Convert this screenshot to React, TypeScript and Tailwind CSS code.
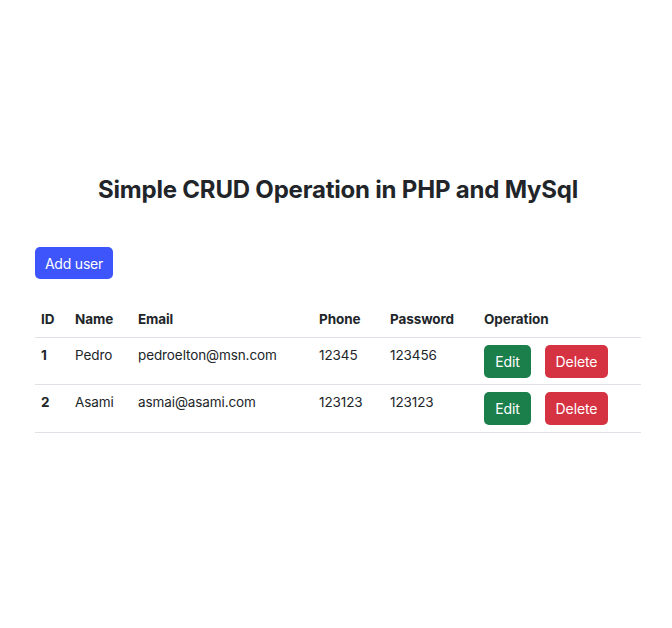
const users = [
  { id: 1, name: "Pedro", email: "pedroelton@msn.com", phone: "12345", password: "123456" },
  { id: 2, name: "Asami", email: "asmai@asami.com", phone: "123123", password: "123123" },
];

export default function App() {
  return (
    <div className="w-[672px] h-[628px] bg-white pl-[35px] pr-[31px] pt-[175px] text-[#212529] font-['Inter','Liberation_Sans',sans-serif]">
      <h1 className="text-center text-[24px] leading-[30px] font-bold tracking-[-0.2px]">
        Simple CRUD Operation in PHP and MySql
      </h1>

      <button className="mt-[42px] h-[32px] w-[78px] rounded-[5px] bg-[#3d55fb] text-white text-[14px] tracking-[-0.2px]">
        Add user
      </button>

      <table className="mt-[21px] w-full text-[13.5px] tracking-[-0.1px] border-collapse">
        <colgroup>
          <col className="w-[34px]" />
          <col className="w-[63px]" />
          <col className="w-[181px]" />
          <col className="w-[71px]" />
          <col className="w-[94px]" />
          <col />
        </colgroup>
        <thead>
          <tr className="border-b border-[#dee2e6] h-[37px]">
            <th className="text-left font-bold px-[6px] pt-[1px]">ID</th>
            <th className="text-left font-bold px-[6px] pt-[1px]">Name</th>
            <th className="text-left font-bold px-[6px] pt-[1px]">Email</th>
            <th className="text-left font-bold px-[6px] pt-[1px]">Phone</th>
            <th className="text-left font-bold px-[6px] pt-[1px]">Password</th>
            <th className="text-left font-bold px-[6px] pt-[1px]">Operation</th>
          </tr>
        </thead>
        <tbody>
          {users.map((u) => (
            <tr key={u.id} className="border-b border-[#dee2e6] h-[47.5px]">
              <td className="align-top px-[6px] pt-[7px] leading-[21px] font-bold">{u.id}</td>
              <td className="align-top px-[6px] pt-[7px] leading-[21px]">{u.name}</td>
              <td className="align-top px-[6px] pt-[7px] leading-[21px]">{u.email}</td>
              <td className="align-top px-[6px] pt-[7px] leading-[21px]">{u.phone}</td>
              <td className="align-top px-[6px] pt-[7px] leading-[21px]">{u.password}</td>
              <td className="align-top px-[6px] pt-[7px]">
                <div className="flex gap-[14px]">
                  <button className="h-[33px] w-[47px] rounded-[5px] bg-[#1b7f4b] text-white text-[14px]">
                    Edit
                  </button>
                  <button className="h-[33px] w-[63px] rounded-[5px] bg-[#d63342] text-white text-[14px]">
                    Delete
                  </button>
                </div>
              </td>
            </tr>
          ))}
        </tbody>
      </table>
    </div>
  );
}
